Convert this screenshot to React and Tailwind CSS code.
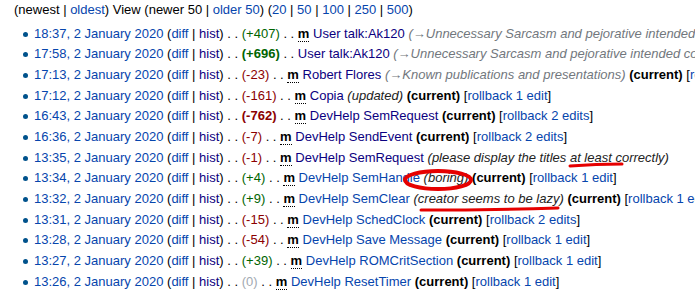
const rows = [
  { time: "18:37", size: "+407", minor: true, title: "User talk:Ak120", visited: true, auto: "Unnecessary Sarcasm and pejorative intended comment" },
  { time: "17:58", size: "+696", big: true, title: "User talk:Ak120", visited: true, auto: "Unnecessary Sarcasm and pejorative intended comment" },
  { time: "17:13", size: "-23", minor: true, title: "Robert Flores", visited: true, auto: "Known publications and presentations", current: true, rollback: "rollback 1 edit" },
  { time: "17:12", size: "-161", minor: true, title: "Copia", visited: true, comment: "updated", current: true, rollback: "rollback 1 edit" },
  { time: "16:43", size: "-762", big: true, minor: true, title: "DevHelp SemRequest", visited: true, current: true, rollback: "rollback 2 edits" },
  { time: "16:36", size: "-7", minor: true, title: "DevHelp SendEvent", visited: true, current: true, rollback: "rollback 2 edits" },
  { time: "13:35", size: "-1", minor: true, title: "DevHelp SemRequest", visited: true, comment: "please display the titles at least correctly" },
  { time: "13:34", size: "+4", minor: true, title: "DevHelp SemHandle", comment: "boring", current: true, rollback: "rollback 1 edit" },
  { time: "13:32", size: "+9", minor: true, title: "DevHelp SemClear", comment: "creator seems to be lazy", current: true, rollback: "rollback 1 edit" },
  { time: "13:31", size: "-15", minor: true, title: "DevHelp SchedClock", current: true, rollback: "rollback 2 edits" },
  { time: "13:28", size: "-54", minor: true, title: "DevHelp Save Message", current: true, rollback: "rollback 1 edit" },
  { time: "13:27", size: "+39", minor: true, title: "DevHelp ROMCritSection", current: true, rollback: "rollback 1 edit" },
  { time: "13:26", size: "0", minor: true, title: "DevHelp ResetTimer", current: true, rollback: "rollback 1 edit" },
];

function sizeClass(size, big) {
  let color = "text-[#006400]";
  if (size.startsWith("-")) color = "text-[#8b0000]";
  if (size === "0") color = "text-[#a2a9b1]";
  return `${color} ${big ? "font-bold" : ""}`;
}

function Row({ row }) {
  return (
    <li className="flex items-center">
      <span className="mr-[6px] h-[5px] w-[5px] shrink-0 rounded-full bg-[#00528c]" />
      <span>
        <a className="text-[#0645ad]">{row.time}, 2 January 2020</a>{" "}
        (<a className="text-[#0645ad]">diff</a> | <a className="text-[#0b0080]">hist</a>){" "}
        . .{" "}
        <span className={sizeClass(row.size, row.big)}>({row.size})</span>{" "}
        . .{" "}
        {row.minor && (
          <>
            <abbr className="font-bold no-underline border-b border-dotted border-black">m</abbr>{" "}
          </>
        )}
        <a className={row.visited ? "text-[#0b0080]" : "text-[#0645ad]"}>{row.title}</a>
        {row.auto && (
          <>
            {" "}
            <span className="italic text-[#72777d]">(→{row.auto})</span>
          </>
        )}
        {row.comment && (
          <>
            {" "}
            <span className="italic text-[#222]">({row.comment})</span>
          </>
        )}
        {row.current && (
          <>
            {" "}
            <span className="font-bold">(current)</span>
          </>
        )}
        {row.rollback && (
          <>
            {" "}
            [<a className="text-[#0645ad]">{row.rollback}</a>]
          </>
        )}
      </span>
    </li>
  );
}

export default function App() {
  return (
    <div className="relative h-[296px] w-[695px] overflow-hidden whitespace-nowrap bg-white pl-[14px] font-['Liberation_Sans',Arial,sans-serif] text-[13px] leading-[20.67px] text-black">
      <p>
        (newest | <a className="text-[#0645ad]">oldest</a>) View (newer 50 | <a className="text-[#0645ad]">older 50</a>) (
        <a className="text-[#0645ad]">20</a> | <a className="text-[#0645ad]">50</a> |{" "}
        <a className="text-[#0645ad]">100</a> | <a className="text-[#0645ad]">250</a> |{" "}
        <a className="text-[#0645ad]">500</a>)
      </p>
      <ul className="mt-[3px] pl-[9px]">
        {rows.map((row, i) => (
          <Row key={i} row={row} />
        ))}
      </ul>

      <svg className="pointer-events-none absolute left-0 top-0" width="695" height="296" viewBox="0 0 695 296">
        <ellipse cx="438" cy="180" rx="33" ry="9" fill="none" stroke="#e60000" strokeWidth="4" />
        <path d="M570 166 Q596 164 622 164" fill="none" stroke="#e60000" strokeWidth="3" strokeLinecap="round" />
        <path d="M421 210 Q490 210 558 208" fill="none" stroke="#e60000" strokeWidth="3" strokeLinecap="round" />
      </svg>
    </div>
  );
}
